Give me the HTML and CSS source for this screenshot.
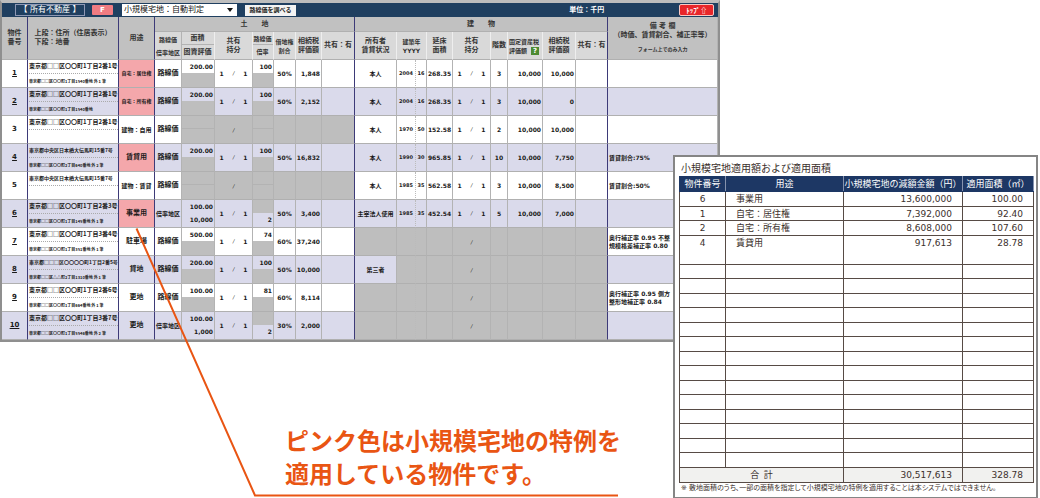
FILE: index.html
```html
<!DOCTYPE html>
<html lang="ja">
<head>
<meta charset="utf-8">
<title>所有不動産</title>
<link rel="stylesheet" href="styles.css">
</head>
<body>
<main class="page">
<section class="panel">
<header class="bar">
<button class="tab" type="button">【 所有不動産 】</button>
<button class="fbtn" type="button">F</button>
<span class="pick"><select aria-label="小規模宅地の判定"><option>小規模宅地：自動判定</option></select></span>
<button class="lookup" type="button">路線価を調べる</button>
<span class="unit">単位：千円</span>
<button class="top" type="button">ﾄｯﾌﾟ⇧</button>
</header>
<table class="estate">
<colgroup><col class="w26"><col class="w91"><col class="w36"><col class="w27"><col class="w33"><col class="w38"><col class="w21"><col class="w22"><col class="w26"><col class="w33"><col class="w42"><col class="w19"><col class="w11"><col class="w26"><col class="w38"><col class="w17"><col class="w35"><col class="w33"><col class="w32"><col></colgroup>
<thead>
<tr class="groups"><th rowspan="2">物件<br>番号</th><th rowspan="2" class="key addrhead"><span>上段：住所（住居表示）<br>下段：地番</span></th><th rowspan="2" class="key">用途</th><th colspan="7" class="key">土　　地</th><th colspan="9" class="key">建　　物</th><th rowspan="2">備 考 欄<br>（時価、賃貸割合、補正率等）<br><small>フォーム上でのみ入力</small></th></tr>
<tr class="heads"><th class="tiny"><div>路線価</div><div>倍率地区</div></th><th class="split"><div>面積</div><div>固資評価</div></th><th>共有<br>持分</th><th class="split tiny"><div>路線価</div><div>倍率</div></th><th class="tiny">借地権<br>割合</th><th>相続税<br>評価額</th><th class="key">共有：有</th><th>所有者<br>賃貸状況</th><th colspan="2" class="tiny">建築年<br>YYYY</th><th>延床<br>面積</th><th>共有<br>持分</th><th>階数</th><th class="tiny lefted">固定資産税<br>評価額 <span class="help">?</span></th><th>相続税<br>評価額</th><th class="key">共有：有</th></tr>
</thead>
<tbody>
<tr><td><u>1</u></td><td class="addr key"><div>東京都□□区〇〇町1丁目2番1号</div><div class="lot">東京都□□区〇〇町1丁目1540番地 外 1 筆</div></td><td class="use pink key">自宅：居住権</td><td class="kind">路線価</td><td class="split"><div>200.00</div><div class="off"></div></td><td><span class="share"><b>1</b><i>/</i><b>1</b></span></td><td class="split"><div>100</div><div class="off"></div></td><td>50%</td><td class="num">1,848</td><td class="key"></td><td class="who">本人</td><td class="yr">2004</td><td class="age">16</td><td class="floor">268.35</td><td><span class="share"><b>1</b><i>/</i><b>1</b></span></td><td>3</td><td class="num">10,000</td><td class="num">10,000</td><td class="key"></td><td class="note"></td></tr>
<tr><td><u>2</u></td><td class="addr key"><div>東京都□□区〇〇町1丁目2番1号</div><div class="lot">東京都□□区〇〇町1丁目1540番地</div></td><td class="use pink key">自宅：所有権</td><td class="kind">路線価</td><td class="split"><div>200.00</div><div class="off"></div></td><td><span class="share"><b>1</b><i>/</i><b>1</b></span></td><td class="split"><div>100</div><div class="off"></div></td><td>50%</td><td class="num">2,152</td><td class="key"></td><td class="who">本人</td><td class="yr">2004</td><td class="age">16</td><td class="floor">268.35</td><td><span class="share"><b>1</b><i>/</i><b>1</b></span></td><td>3</td><td class="num">10,000</td><td class="num">0</td><td class="key"></td><td class="note"></td></tr>
<tr><td>3</td><td class="addr key"><div>東京都□□区〇〇町1丁目2番1号</div><div class="lot"></div></td><td class="use mid key">建物：自用</td><td class="kind">路線価</td><td class="split off"><div></div><div class="off"></div></td><td class="off"><i>/</i></td><td class="split off"><div></div><div class="off"></div></td><td class="off"></td><td class="off"></td><td class="off key"></td><td class="who">本人</td><td class="yr">1970</td><td class="age">50</td><td class="floor">152.58</td><td><span class="share"><b>1</b><i>/</i><b>1</b></span></td><td>2</td><td class="num">10,000</td><td class="num">10,000</td><td class="key"></td><td class="note"></td></tr>
<tr><td><u>4</u></td><td class="addr narrow key"><div>東京都中央区日本橋大伝馬町15番7号</div><div class="lot">東京都□□区〇〇町2丁目640番地 外 2 筆</div></td><td class="use wide pink key">賃貸用</td><td class="kind">路線価</td><td class="split"><div>200.00</div><div class="off"></div></td><td><span class="share"><b>1</b><i>/</i><b>1</b></span></td><td class="split"><div>100</div><div class="off"></div></td><td>50%</td><td class="num">16,832</td><td class="key"></td><td class="who">本人</td><td class="yr">1990</td><td class="age">30</td><td class="floor">965.85</td><td><span class="share"><b>1</b><i>/</i><b>1</b></span></td><td>10</td><td class="num">10,000</td><td class="num">7,750</td><td class="key"></td><td class="note">賃貸割合:75%</td></tr>
<tr><td>5</td><td class="addr narrow key"><div>東京都中央区日本橋大伝馬町15番7号</div><div class="lot"></div></td><td class="use mid key">建物：賃貸</td><td class="kind">路線価</td><td class="split off"><div></div><div class="off"></div></td><td class="off"><i>/</i></td><td class="split off"><div></div><div class="off"></div></td><td class="off"></td><td class="off"></td><td class="off key"></td><td class="who">本人</td><td class="yr">1985</td><td class="age">35</td><td class="floor">562.58</td><td><span class="share"><b>1</b><i>/</i><b>1</b></span></td><td>3</td><td class="num">10,000</td><td class="num">8,500</td><td class="key"></td><td class="note">賃貸割合:50%</td></tr>
<tr><td><u>6</u></td><td class="addr key"><div>東京都□□区〇〇町1丁目2番3号</div><div class="lot">東京都□□区〇〇町1丁目145番地 外 1 筆</div></td><td class="use wide pink key">事業用</td><td class="kind long">倍率地区</td><td class="split"><div>100.00</div><div>10,000</div></td><td><span class="share"><b>1</b><i>/</i><b>1</b></span></td><td class="split"><div class="off"></div><div>2</div></td><td>50%</td><td class="num">3,400</td><td class="key"></td><td class="who">主宰法人使用</td><td class="yr">1985</td><td class="age">35</td><td class="floor">452.54</td><td><span class="share"><b>1</b><i>/</i><b>1</b></span></td><td>5</td><td class="num">10,000</td><td class="num">7,000</td><td class="key"></td><td class="note"></td></tr>
<tr><td><u>7</u></td><td class="addr key"><div>東京都□□区〇〇町1丁目3番4号</div><div class="lot">東京都□□区〇〇町1丁目351番地 外 1 筆</div></td><td class="use wide key">駐車場</td><td class="kind">路線価</td><td class="split"><div>500.00</div><div class="off"></div></td><td><span class="share"><b>1</b><i>/</i><b>1</b></span></td><td class="split"><div>74</div><div class="off"></div></td><td>60%</td><td class="num">37,240</td><td class="key"></td><td class="off"></td><td class="yr off"></td><td class="off"></td><td class="off"></td><td class="off"><i>/</i></td><td class="off"></td><td class="off"></td><td class="off"></td><td class="off key"></td><td class="note">奥行補正率 0.95 不整<br>規模格差補正率 0.80</td></tr>
<tr><td><u>8</u></td><td class="addr narrow key"><div>東京都□□□区〇〇〇〇町1丁目2番5号</div><div class="lot">東京都□□区△△町2丁目1310番地 外 1 筆</div></td><td class="use wide key">貸地</td><td class="kind">路線価</td><td class="split"><div>200.00</div><div class="off"></div></td><td><span class="share"><b>1</b><i>/</i><b>1</b></span></td><td class="split"><div>100</div><div class="off"></div></td><td>50%</td><td class="num">10,000</td><td class="key"></td><td class="who">第三者</td><td class="yr off"></td><td class="off"></td><td class="off"></td><td class="off"><i>/</i></td><td class="off"></td><td class="off"></td><td class="off"></td><td class="off key"></td><td class="note"></td></tr>
<tr><td><u>9</u></td><td class="addr key"><div>東京都□□区〇〇町1丁目2番6号</div><div class="lot">東京都□□区〇〇町1丁目664番地 外 1 筆</div></td><td class="use wide key">更地</td><td class="kind">路線価</td><td class="split"><div>100.00</div><div class="off"></div></td><td><span class="share"><b>1</b><i>/</i><b>1</b></span></td><td class="split"><div>81</div><div class="off"></div></td><td>60%</td><td class="num">8,114</td><td class="key"></td><td class="off"></td><td class="yr off"></td><td class="off"></td><td class="off"></td><td class="off"><i>/</i></td><td class="off"></td><td class="off"></td><td class="off"></td><td class="off key"></td><td class="note">奥行補正率 0.95 側方<br>整形地補正率 0.84</td></tr>
<tr><td><u>10</u></td><td class="addr key"><div>東京都□□区〇〇町1丁目3番7号</div><div class="lot">東京都□□区〇〇町1丁目5546番地 外 2 筆</div></td><td class="use wide key">更地</td><td class="kind long">倍率地区</td><td class="split"><div>100.00</div><div>1,000</div></td><td><span class="share"><b>1</b><i>/</i><b>1</b></span></td><td class="split"><div class="off"></div><div>2</div></td><td>30%</td><td class="num">2,000</td><td class="key"></td><td class="off"></td><td class="yr off"></td><td class="off"></td><td class="off"></td><td class="off"><i>/</i></td><td class="off"></td><td class="off"></td><td class="off"></td><td class="off key"></td><td class="note"></td></tr>
</tbody>
</table>
</section>
<p class="callout">ピンク色は小規模宅地の特例を<br>適用している物件です。</p>
<svg class="leader" width="620" height="498" viewBox="0 0 620 498" aria-hidden="true"><path d="M136.500 228.500L255 495.500H618" fill="none" stroke="#e95513" stroke-width="2"/></svg>
<aside class="card">
<h2>小規模宅地適用額および適用面積</h2>
<table class="relief">
<colgroup><col class="c1"><col class="c2"><col class="c3"><col class="c4"></colgroup>
<thead><tr><th>物件番号</th><th>用途</th><th>小規模宅地の減額金額（円）</th><th>適用面積（㎡）</th></tr></thead>
<tbody>
<tr><td>6</td><td>事業用</td><td>13,600,000</td><td>100.00</td></tr>
<tr><td>1</td><td>自宅：居住権</td><td>7,392,000</td><td>92.40</td></tr>
<tr><td>2</td><td>自宅：所有権</td><td>8,608,000</td><td>107.60</td></tr>
<tr class="open"><td>4</td><td>賃貸用</td><td>917,613</td><td>28.78</td></tr>
<tr><td></td><td></td><td></td><td></td></tr>
<tr><td></td><td></td><td></td><td></td></tr>
<tr><td></td><td></td><td></td><td></td></tr>
<tr><td></td><td></td><td></td><td></td></tr>
<tr><td></td><td></td><td></td><td></td></tr>
<tr><td></td><td></td><td></td><td></td></tr>
<tr><td></td><td></td><td></td><td></td></tr>
<tr><td></td><td></td><td></td><td></td></tr>
<tr><td></td><td></td><td></td><td></td></tr>
<tr><td></td><td></td><td></td><td></td></tr>
<tr><td></td><td></td><td></td><td></td></tr>
<tr><td></td><td></td><td></td><td></td></tr>
<tr><td></td><td></td><td></td><td></td></tr>
<tr><td></td><td></td><td></td><td></td></tr>
<tr><td></td><td></td><td></td><td></td></tr>
</tbody>
<tfoot><tr><td colspan="2">合&ensp;計</td><td>30,517,613</td><td>328.78</td></tr></tfoot>
</table>
<p>※ 敷地面積のうち、一部の面積を指定して小規模宅地の特例を適用することは本システムではできません。</p>
</aside>
</main>
</body>
</html>
```

FILE: styles.css
```css
* { box-sizing: border-box; }

body {
  margin: 0;
  background: #fff;
  color: #1a1a1a;
  font-family: "DejaVu Sans", "Noto Sans CJK JP", sans-serif;
}

.page { position: relative; overflow: hidden; }

/* Property ledger */
.panel {
  width: 69.25%;
  min-width: 720px;
  border: 2px solid #8f8f8f;
  border-top: 3px solid #bdbdbd;
  white-space: nowrap;
}

.bar {
  display: flex;
  align-items: center;
  height: 14px;
  padding: 0 4px 0 13px;
  background: #1f3f60;
  color: #fff;
  font-size: 7px;
  font-weight: bold;
  line-height: 10px;
}

.bar button, .bar select {
  height: 12px;
  margin: 0;
  padding: 0;
  border: 0;
  border-radius: 0;
  font: inherit;
  white-space: nowrap;
}

.bar .tab { width: 70px; border: 1px solid #8d97b4; background: #1f3f60; color: #fff; font-size: 8px; font-weight: normal; line-height: 10px; }
.bar .fbtn { width: 21px; height: 10px; margin-left: 7px; border-radius: 1px; background: #f07c82; color: #fff; }
.pick { position: relative; display: flex; width: 115px; margin-left: 9px; }
.bar .pick select { width: 100%; padding-left: 2px; appearance: none; background: #fff; color: #111; font-size: 8px; font-weight: normal; }
.pick::after {
  content: "";
  position: absolute;
  top: 4px;
  right: 4px;
  border: 3px solid transparent;
  border-top: 4px solid #111;
  border-bottom: 0;
  pointer-events: none;
}
.bar .lookup { width: 51px; height: 11px; margin-left: 8px; background: #f3f3f3; color: #222; font-size: 6px; }
.unit { margin-left: auto; margin-right: 75px; }
.bar .top {
  width: 35px;
  height: 12px;
  border: 1px solid #f7c9c4;
  border-radius: 2px;
  background: #e8262a;
  color: #fff;
  font-family: "Noto Sans CJK JP", sans-serif;
  line-height: 9px;
}

.estate { width: 100%; table-layout: fixed; border-collapse: separate; border-spacing: 0; }
.w11 { width: 11px; }
.w17 { width: 17px; }
.w19 { width: 19px; }
.w21 { width: 21px; }
.w22 { width: 22px; }
.w26 { width: 26px; }
.w27 { width: 27px; }
.w32 { width: 32px; }
.w33 { width: 33px; }
.w35 { width: 35px; }
.w36 { width: 36px; }
.w38 { width: 38px; }
.w42 { width: 42px; }
.w91 { width: 91px; }

.estate th, .estate td {
  padding: 0;
  overflow: hidden;
  border-right: 1px solid #b3b3b3;
  border-bottom: 1px solid #b0b0b0;
  font-size: 6px;
  font-weight: bold;
  line-height: 9px;
  text-align: center;
  vertical-align: middle;
}
.estate th { background: #c1c1c1; color: #333; font-size: 7px; }
.estate th:first-child, .estate td:first-child { border-right-color: #3d3a78; }
.estate .heads th:first-child { border-right-color: #b3b3b3; }
.estate .key { border-right-color: #3d3a78; }
.groups { height: 15px; }
.heads { height: 28px; }
.estate .heads th { border-right-color: #eee; background: #d9d9d9; }
.estate .heads .key { border-right-color: #3d3a78; }
.addrhead span { display: inline-block; text-align: left; }
.estate .tiny { font-size: 6px; }
.estate .lefted { text-align: left; padding-left: 1px; }
.estate small { display: block; margin-top: 5px; font-size: 5px; }
.estate .heads .tiny div { line-height: 13px; }
.help { display: inline-block; width: 8px; margin-left: 2px; background: #4c8a32; color: #fff; font-size: 7px; line-height: 8px; text-align: center; }

.estate tbody tr { height: 28px; background: #fff; }
.estate tbody tr:nth-child(even) { background: #dadaeb; }
.estate td:first-child { font-size: 7px; }
.estate .split div { height: 14px; padding-right: 1px; line-height: 14px; text-align: right; }
.estate .split div:first-child { height: 13px; line-height: 13px; }
.estate th.split div { text-align: center; }
.estate th.split div:first-child, .estate td.split.off div:first-child { border-bottom: 1px solid #b3b3b3; }
.estate .off { background: #bebebe; }
.estate i { font-size: 5px; font-weight: normal; }
.estate .pink { background: #f4a7ab; }

.estate td.addr { padding-left: 1px; font-family: "Noto Sans CJK JP", sans-serif; text-align: left; vertical-align: top; }
.addr div { height: 13px; line-height: 12px; }
.addr.narrow div { font-size: 5px; }
.addr .lot, .addr.narrow .lot { height: 14px; border-top: 1px dotted #aaa; font-size: 4px; line-height: 14px; }
.estate .use { font-size: 5px; }
.estate .wide, .estate .kind { font-size: 7px; }
.estate .mid, .estate .long { font-size: 6px; }
.estate .num { padding-right: 1px; text-align: right; }
.estate .yr { border-right: 1px dotted #bbb; font-size: 5px; }
.estate .age { font-size: 5px; }
.share { display: flex; justify-content: space-around; }
.estate td.note { padding-left: 1px; text-align: left; line-height: 8px; }

/* Callout */
.callout {
  margin: 0;
  padding: 81px 0 10px 285px;
  color: #e95513;
  font-family: "Noto Sans CJK JP", sans-serif;
  font-size: 24px;
  font-weight: bold;
  line-height: 33px;
}
.leader { position: absolute; top: 0; left: 0; pointer-events: none; }

/* Relief summary laid over the ledger */
.card {
  position: absolute;
  top: 155px;
  right: 2px;
  width: 365px;
  padding: 5px 3px 3px 4px;
  border: 2px solid #858585;
  background: #fff;
  color: #3b302c;
  white-space: nowrap;
}
.card h2 { margin: 0; padding-left: 2px; font-size: 10px; font-weight: normal; line-height: 14px; }
.relief { width: 100%; table-layout: fixed; border-collapse: collapse; font-size: 9px; line-height: 12px; }
.c1 { width: 46px; }
.c2 { width: 118px; }
.c3 { width: 119px; }
.c4 { width: 71px; }
.relief th { height: 15px; padding: 0; border: 1px solid #1d3764; border-right-color: #8592ad; background: #1d3764; color: #fff; font-weight: normal; }
.relief td { height: 15px; padding: 0 10px; border: 1px solid #574b45; text-align: right; }
.relief tbody tr:nth-child(even) td { height: 14px; }
.relief td:first-child { padding: 0; text-align: center; }
.relief td:nth-child(2) { text-align: left; }
.relief .open td { border-bottom: 0; }
.relief .open + tr td { border-top: 0; }
.relief tfoot td { background: #f1f1ef; }
.relief tfoot td:nth-child(2) { text-align: right; }
.card p { margin: 0; padding-left: 2px; font-size: 7px; line-height: 11px; font-feature-settings: "palt"; }
```
